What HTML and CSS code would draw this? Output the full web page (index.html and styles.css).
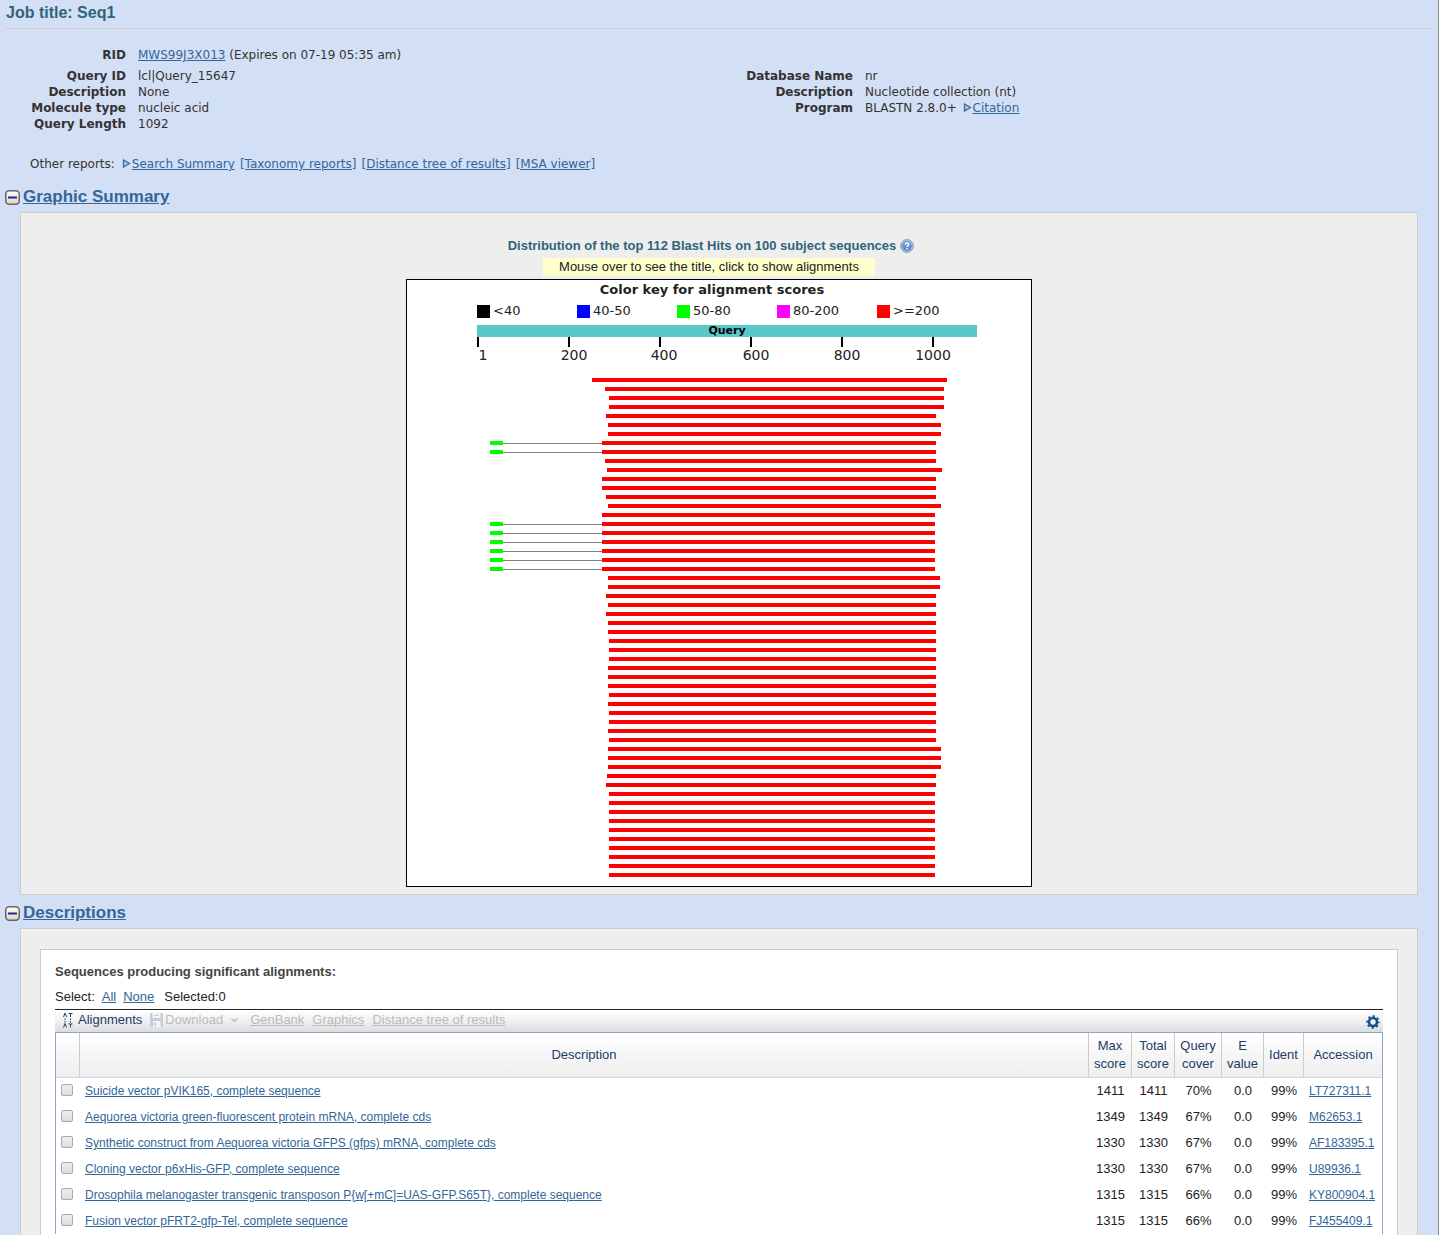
FILE: index.html
```html
<!DOCTYPE html>
<html lang="en">
<head>
<meta charset="utf-8">
<title>NCBI Blast: Seq1</title>
<link rel="stylesheet" href="styles.css">
</head>
<body>
<svg class="sprite" aria-hidden="true">
  <defs>
    <linearGradient id="toggle-fill" x1="0" y1="0" x2="0" y2="1"><stop offset="0" stop-color="#fff"/><stop offset="1" stop-color="#d8d6c0"/></linearGradient>
    <linearGradient id="help-fill" x1="0" y1="0" x2="0" y2="1"><stop offset="0" stop-color="#6f9bd8"/><stop offset="1" stop-color="#5d83bd"/></linearGradient>
  </defs>
  <symbol id="minus" viewBox="0 0 15 15"><rect x=".75" y=".75" width="13.5" height="13.5" rx="3.5" fill="url(#toggle-fill)" stroke="#666" stroke-width="1.5"/><path d="M3 7.5h9" stroke="#26268c" stroke-width="2"/></symbol>
  <symbol id="arrow" viewBox="0 0 9 9"><path d="M1.5 1v7l6-3.5z" fill="#a9c8ea" stroke="#44699c" stroke-width="1.3"/></symbol>
</svg>
<main class="page">
  <h1 class="job-title">Job title: Seq1</h1>

  <div class="info">
    <dl class="facts">
      <dt class="rid">RID</dt><dd class="rid"><a href="#rid">MWS99J3X013</a> (Expires on 07-19 05:35 am)</dd>
      <dt>Query ID</dt><dd>lcl|Query_15647</dd>
      <dt>Description</dt><dd>None</dd>
      <dt>Molecule type</dt><dd>nucleic acid</dd>
      <dt>Query Length</dt><dd>1092</dd>
    </dl>
    <dl class="facts facts-db">
      <dt>Database Name</dt><dd>nr</dd>
      <dt>Description</dt><dd>Nucleotide collection (nt)</dd>
      <dt>Program</dt><dd>BLASTN 2.8.0+ <svg class="arrow"><use href="#arrow"/></svg><a href="#citation">Citation</a></dd>
    </dl>
  </div>

  <nav class="reports">
    <span>Other reports:</span>
    <span><svg class="arrow"><use href="#arrow"/></svg><a href="#summary">Search Summary</a></span>
    <a href="#taxonomy">[Taxonomy reports]</a>
    <a href="#tree">[Distance tree of results]</a>
    <a href="#msa">[MSA viewer]</a>
  </nav>

  <section>
    <h2 class="section-title"><svg class="toggle"><use href="#minus"/></svg><a href="#graphic">Graphic Summary</a></h2>
    <div class="panel" id="graphic">
      <h3 class="graph-title">Distribution of the top 112 Blast Hits on 100 subject sequences
        <svg class="help" viewBox="0 0 14 14" role="img" aria-label="Help"><circle cx="7" cy="7" r="6.3" fill="#b9cdec" stroke="#6f8fc0"/><circle cx="7" cy="7" r="4.9" fill="url(#help-fill)"/><path d="M5.2 5.7c0-2.3 3.6-2.2 3.6-.2C8.8 6.7 7 6.9 7 8.1M7 9.1v1.5" fill="none" stroke="#fff" stroke-width="1.4"/></svg>
      </h3>
      <p class="hint">Mouse over to see the title, click to show alignments</p>
      <div class="graph">
        <h4 class="key-title">Color key for alignment scores</h4>
        <ul class="key">
          <li><i class="swatch s40"></i>&lt;40</li>
          <li><i class="swatch s50"></i>40-50</li>
          <li><i class="swatch s80"></i>50-80</li>
          <li><i class="swatch s200"></i>80-200</li>
          <li><i class="swatch smax"></i>&gt;=200</li>
        </ul>
        <div class="query">Query</div>
        <svg class="axis" viewBox="0 0 500 41">
          <path d="M1 0v10M92 0v10M183 0v10M274 0v10M365 0v10M456 0v10" stroke="#000" stroke-width="2"/>
          <g text-anchor="middle"><text x="6" y="23">1</text><text x="97" y="23">200</text><text x="187" y="23">400</text><text x="279" y="23">600</text><text x="370" y="23">800</text><text x="456" y="23">1000</text></g>
        </svg>
        <svg class="hits" viewBox="0 0 500 508" shape-rendering="crispEdges">
          <path stroke="gray" stroke-width="1" d="M26 65.5H125M26 74.5H125M26 146.5H125M26 155.5H125M26 164.5H125M26 173.5H125M26 182.5H125M26 191.5H125"/>
          <path stroke="#0f0" stroke-width="4" d="M13 65H26M13 74H26M13 146H26M13 155H26M13 164H26M13 173H26M13 182H26M13 191H26"/>
          <path stroke="#f00" stroke-width="4" d="M115 2H470M128 11H467M132 20H467M132 29H467M129 38H459M131 47H464M131 56H464M125 65H459M125 74H459M128 83H459M130 92H465M125 101H459M125 110H459M129 119H459M131 128H464M125 137H458M125 146H458M125 155H458M125 164H458M125 173H458M125 182H458M125 191H458M131 200H463M131 209H463M129 218H459M131 227H459M129 236H459M131 245H459M131 254H459M132 263H459M132 272H459M132 281H459M131 290H459M131 299H459M131 308H459M132 317H459M131 326H459M132 335H459M132 344H459M131 353H459M132 362H459M131 371H464M131 380H464M131 389H464M130 398H459M129 407H459M132 416H458M132 425H458M132 434H458M132 443H458M132 452H458M132 461H458M132 470H458M132 479H458M132 488H458M132 497H458"/>
        </svg>
      </div>
    </div>
  </section>

  <section class="descriptions">
    <h2 class="section-title"><svg class="toggle"><use href="#minus"/></svg><a href="#descr">Descriptions</a></h2>
    <div class="panel panel-descr" id="descr">
      <div class="sheet">
        <h3 class="sheet-title">Sequences producing significant alignments:</h3>
        <div class="select-row"><span>Select:</span><a href="#all">All</a><a href="#none">None</a><span class="count">Selected:0</span></div>
        <div class="toolbar">
          <button type="button" class="tool"><svg class="tool-icon" viewBox="0 0 12 16" aria-hidden="true"><path d="M1.5 5 3 1 4.500 5M6.500 1.500h4M8.500 1.500V5M1.500 15.500 3 11.500 4.500 15.500M6.500 12h4M8.500 12v3.500" fill="none" stroke="#1f4a78"/><path d="M3 6.500v1.500M3 9v1.500M8.500 6.500v1.500M8.500 9v1.500" stroke="#1f4a78"/></svg>Alignments</button>
          <button type="button" class="tool download" disabled><svg class="disk" viewBox="0 0 13 14"><path d="M0 0h13v14H0z" fill="#c3d0dc"/><path d="M2.5 0h8v5h-8zM3 8h7.5v6H3z" fill="#f2f5f7"/><path d="M4 9.5h2v3.5H4z" fill="#c3d0dc"/><path d="M4 2.5h5" stroke="#c3d0dc"/></svg>Download<svg class="chevron" viewBox="0 0 11 11"><path d="M2.5 4.500 5.500 7.500 8.500 4.500" fill="none" stroke="#b4bfca" stroke-width="1.5"/></svg></button>
          <a class="off" href="#genbank">GenBank</a>
          <a class="off" href="#graphics">Graphics</a>
          <a class="off" href="#dtree">Distance tree of results</a>
          <button type="button" class="settings" aria-label="Columns"><svg class="gear" viewBox="0 0 14 14"><circle cx="7" cy="7" r="4" fill="none" stroke="#14508c" stroke-width="2.6"/><circle cx="7" cy="7" r="5.9" fill="none" stroke="#14508c" stroke-width="1.6" stroke-dasharray="2.3 2.334" stroke-dashoffset="1.15"/></svg></button>
        </div>
        <table class="hits-table">
          <colgroup><col class="c-check"><col><col class="c-score"><col class="c-score"><col class="c-cover"><col class="c-value"><col class="c-ident"><col class="c-acc"></colgroup>
          <thead><tr><th></th><th>Description</th><th>Max<br>score</th><th>Total<br>score</th><th>Query<br>cover</th><th>E<br>value</th><th>Ident</th><th>Accession</th></tr></thead>
          <tbody>
            <tr><td><input type="checkbox" aria-label="Select LT727311.1"></td><td><a href="#h1">Suicide vector pVIK165, complete sequence</a></td><td>1411</td><td>1411</td><td>70%</td><td>0.0</td><td>99%</td><td><a href="#a1">LT727311.1</a></td></tr>
            <tr><td><input type="checkbox" aria-label="Select M62653.1"></td><td><a href="#h2">Aequorea victoria green-fluorescent protein mRNA, complete cds</a></td><td>1349</td><td>1349</td><td>67%</td><td>0.0</td><td>99%</td><td><a href="#a2">M62653.1</a></td></tr>
            <tr><td><input type="checkbox" aria-label="Select AF183395.1"></td><td><a href="#h3">Synthetic construct from Aequorea victoria GFPS (gfps) mRNA, complete cds</a></td><td>1330</td><td>1330</td><td>67%</td><td>0.0</td><td>99%</td><td><a href="#a3">AF183395.1</a></td></tr>
            <tr><td><input type="checkbox" aria-label="Select U89936.1"></td><td><a href="#h4">Cloning vector p6xHis-GFP, complete sequence</a></td><td>1330</td><td>1330</td><td>67%</td><td>0.0</td><td>99%</td><td><a href="#a4">U89936.1</a></td></tr>
            <tr><td><input type="checkbox" aria-label="Select KY800904.1"></td><td><a href="#h5">Drosophila melanogaster transgenic transposon P{w[+mC]=UAS-GFP.S65T}, complete sequence</a></td><td>1315</td><td>1315</td><td>66%</td><td>0.0</td><td>99%</td><td><a href="#a5">KY800904.1</a></td></tr>
            <tr><td><input type="checkbox" aria-label="Select FJ455409.1"></td><td><a href="#h6">Fusion vector pFRT2-gfp-Tel, complete sequence</a></td><td>1315</td><td>1315</td><td>66%</td><td>0.0</td><td>99%</td><td><a href="#a6">FJ455409.1</a></td></tr>
          </tbody>
        </table>
      </div>
    </div>
  </section>
</main>
</body>
</html>
```
FILE: styles.css
```css
* { box-sizing: border-box; }
body {
  margin: 0;
  background: #d3dff5;
  color: #333;
  font: 12px/16px "DejaVu Sans", Verdana, sans-serif;
}
h1, h2, h3, h4, p, dl, dd, ul { margin: 0; padding: 0; }
a { color: #369; text-decoration: underline; }
button { font: inherit; border: 0; background: none; padding: 0; }
.sprite { position: absolute; width: 0; height: 0; }

.page {
  display: flex;
  flex-direction: column;
  min-height: 100vh;
  border-right: 1px solid #888;
}

.job-title {
  margin: 0 6px;
  padding: 3px 0 5px;
  border-bottom: 1px solid #ccc;
  color: #2f6578;
  font: bold 16px/20px "Liberation Sans", Arial, sans-serif;
}

/* Query and database facts */
.info {
  display: grid;
  grid-template-columns: 1fr 1fr;
  gap: 16px;
  padding-top: 18px;
}
.facts {
  display: grid;
  grid-template-columns: 126px 1fr;
  column-gap: 12px;
  align-content: start;
}
.facts-db { padding-top: 21px; }
.facts dt { font-weight: bold; text-align: right; }
.facts .rid { padding-bottom: 5px; }
.arrow { width: 9px; height: 9px; margin: 0 1px 0 2px; }
.reports {
  display: flex;
  gap: 5px;
  padding: 24px 0 8px 30px;
}

.section-title {
  display: flex;
  align-items: center;
  gap: 3px;
  padding: 6px 5px 4px;
  font: bold 17px/22px "Liberation Sans", Arial, sans-serif;
}
.toggle { width: 15px; height: 15px; }
.panel {
  margin: 0 20px;
  border: 1px solid #ccc;
  background: #eee;
  padding: 23px 0 7px;
}

/* Graphic summary */
.graph-title {
  display: flex;
  justify-content: center;
  align-items: center;
  gap: 4px;
  padding-right: 16px;
  color: #2f6578;
  font: bold 13px/20px "Liberation Sans", Arial, sans-serif;
}
.help { width: 14px; height: 14px; }
.hint {
  width: 332px;
  margin: 2px auto 3px;
  position: relative;
  right: 10px;
  background: #ffc;
  color: #222;
  text-align: center;
  font: 13px/18px "Liberation Sans", Arial, sans-serif;
}
.graph {
  max-width: 626px;
  margin: 0 auto;
  padding: 2px 54px 0 70px;
  border: 1px solid #000;
  background: #fff;
  color: #222;
  font-size: 13px;
}
.key-title {
  padding-right: 30px;
  text-align: center;
  font-size: 13px;
  line-height: 16px;
}
.key {
  display: grid;
  grid-template-columns: repeat(5, 1fr);
  padding: 5px 0 6px;
  list-style: none;
}
.key li { display: flex; align-items: center; gap: 3px; height: 16px; }
.swatch { width: 13px; height: 13px; }
.s40 { background: #000; }
.s50 { background: #00f; }
.s80 { background: #0f0; }
.s200 { background: #f0f; }
.smax { background: #f00; }
.query {
  background: #58c8c8;
  color: #000;
  text-align: center;
  font-weight: bold;
  font-size: 11px;
  line-height: 12px;
}
.axis, .hits { display: block; width: 100%; }
.axis text { fill: #222; font-size: 14px; }

/* Descriptions */
.descriptions { display: flex; flex-direction: column; flex: 1; padding-top: 1px; }
.panel-descr {
  display: flex;
  flex: 1;
  padding: 20px 19px 0;
  border-bottom: 0;
}
.sheet {
  flex: 1;
  padding: 12px 14px 0;
  border: 1px solid #ccc;
  border-bottom: 0;
  background: #fff;
  color: #222;
  font: 13px/18px "Liberation Sans", Arial, sans-serif;
}
.sheet-title { color: #444; font-size: 13px; line-height: 20px; }
.select-row { display: flex; gap: 7px; padding: 6px 0 3px; }
.count { padding-left: 3px; }
.toolbar {
  display: flex;
  align-items: center;
  gap: 8px;
  height: 23px;
  padding: 0 3px 3px 7px;
  border-top: 1px solid #222;
  background: linear-gradient(#fff, #f0f0f0 50%, #dcdcdc);
}
.tool { display: flex; align-items: center; color: #1b3c66; }
.tool-icon { width: 12px; height: 16px; margin-right: 4px; }
.download { color: #bbb; }
.disk { width: 13px; height: 14px; margin-right: 2px; }
.chevron { width: 11px; height: 11px; margin: 0 2px 0 6px; }
.off { color: #bbb; }
.settings { margin-left: auto; height: 14px; padding-top: 2px; }
.gear { display: block; width: 14px; height: 14px; }

.hits-table {
  width: 100%;
  table-layout: fixed;
  border-collapse: separate;
  border-spacing: 0;
  border: 1px solid #8aa8c6;
  border-bottom: 0;
}
.c-check { width: 24px; }
.c-score { width: 43px; }
.c-cover { width: 47px; }
.c-value { width: 42px; }
.c-ident { width: 40px; }
.c-acc { width: 78px; }
.hits-table th {
  height: 45px;
  padding: 0 2px;
  border-right: 1px solid #ccc;
  border-bottom: 1px solid #ccd8e2;
  background: linear-gradient(#fff, #eee);
  color: #1b3c66;
  font-weight: normal;
}
.hits-table th:last-child { border-right: 0; }
.hits-table td { height: 26px; padding: 0; text-align: center; }
.hits-table td:nth-child(2), .hits-table td:last-child {
  padding-left: 5px;
  text-align: left;
  font-size: 12px;
  white-space: nowrap;
}
.hits-table input {
  display: block;
  appearance: none;
  width: 12px;
  height: 12px;
  margin: 0 0 2px 5px;
  border: 1px solid #aaa;
  border-radius: 2px;
  background: linear-gradient(#eee, #ddd);
}
```
